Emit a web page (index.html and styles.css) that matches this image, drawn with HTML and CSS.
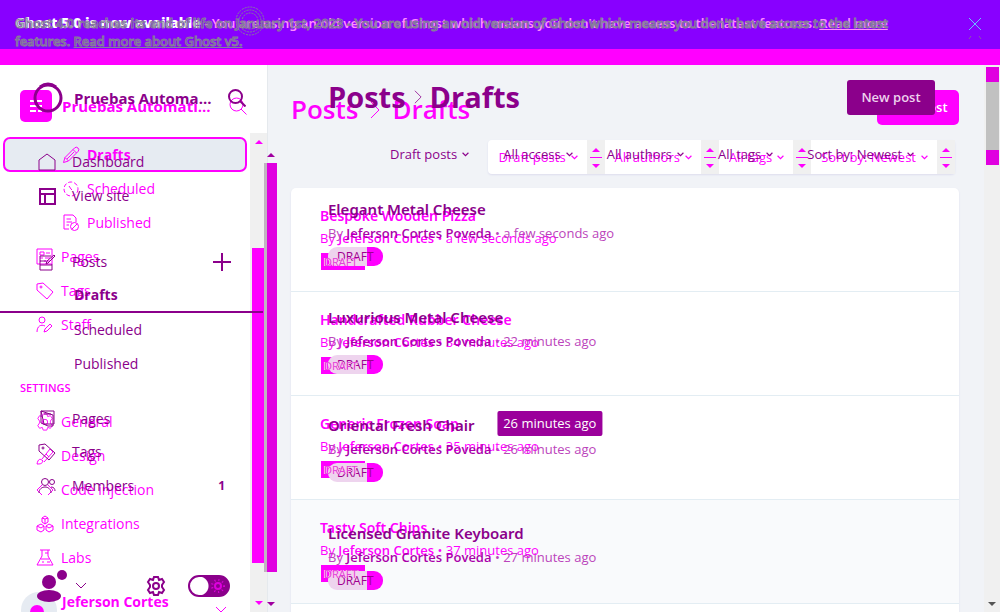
FILE: index.html
```html
<!DOCTYPE html>
<html lang="en">
<head>
<meta charset="utf-8">
<title>Posts - Drafts</title>
<link rel="stylesheet" href="styles.css">
</head>
<body>
<svg class="sprite" aria-hidden="true">
  <symbol id="search" viewBox="0 0 18 18"><circle cx="7.5" cy="7.5" r="6.5"/><path d="M12 12l5.500 5.500"/></symbol>
  <symbol id="pencil" viewBox="0 0 18 18"><path d="M1.500 16.500l1.500-5L12.500 2a2 2 0 0 1 3.500 3.500L6.500 15zM3 11.500L6.500 15M11 3.500L14.500 7M5 13l7-7"/></symbol>
  <symbol id="clock" viewBox="0 0 18 18"><circle cx="9" cy="9" r="7" stroke-dasharray="4 2"/><path d="M7 6l2 3 1 1"/></symbol>
  <symbol id="published" viewBox="0 0 18 18"><path d="M7 15H2V1h9l3 3v4M4.500 5H9M4.500 8H10M4.500 11H7"/><circle cx="12.500" cy="12.500" r="4"/><path d="M10 15l5-5"/></symbol>
  <symbol id="pages" viewBox="0 0 18 18"><path d="M1 1h15v15H1zM4 4h4v3H4zM10 5h4M4 10h3M9 10h5M4 13h1M8 13h6"/></symbol>
  <symbol id="tag" viewBox="0 0 18 18"><path d="M1 2l6-1 10 9-6 7L1 8z"/><circle cx="5" cy="5" r="1"/></symbol>
  <symbol id="staff" viewBox="0 0 18 18"><circle cx="6" cy="4" r="3"/><path d="M1 16c0-6 4-8 8-6M8 16l1-3 5-5 2 2-5 5z"/></symbol>
  <symbol id="gear" viewBox="0 0 20 20"><path d="M8 1h4l1 3 3-1 2 3-2 3v2l2 3-2 3-3-1-1 3H8l-1-3-3 1-2-3 2-3V9L2 6l2-3 3 1z"/><circle cx="10" cy="10" r="3"/></symbol>
  <symbol id="brush" viewBox="0 0 18 18"><path d="M1 17c1-5 3-6 6-3-1 3-3 3-6 3zM6 12l8-10 3 3-9 10M10 7l3 3"/></symbol>
  <symbol id="code" viewBox="0 0 18 18"><path d="M6 4L1 9l5 5M12 4l5 5-5 5"/></symbol>
  <symbol id="blocks" viewBox="0 0 18 18"><path d="M9 1l3 2v4L9 9 6 7V3zM6 3l3 1 3-1M9 4v5M5 9l3 2v4l-3 2-4-2v-4zM13 9l4 2v4l-4 2-3-2v-4zM1 11l4 2 3-2M10 11l3 2 4-2"/></symbol>
  <symbol id="flask" viewBox="0 0 18 18"><path d="M4 1h10M6 1v6L1 16h16L12 7V1M5 10h8M9 4h3M6 13h2M11 13h3"/></symbol>
  <symbol id="home" viewBox="0 0 18 18"><path d="M1 7l8-6 8 6v10H1z"/></symbol>
  <symbol id="layout" viewBox="0 0 18 18"><path d="M2 2h15v15H2zM2 7h15M7 7v10"/></symbol>
  <symbol id="compose" viewBox="0 0 18 18"><path d="M13 3H2v14h12v-6M2 8h6M2 12h12M8 11l1-3 7-6 1 1-7 7z"/></symbol>
  <symbol id="book" viewBox="0 0 18 18"><path d="M3 1h13v13H6zM3 1v12l7 3h5V5zM6 4h7"/></symbol>
  <symbol id="members" viewBox="0 0 18 18"><circle cx="7" cy="5" r="3.500"/><circle cx="14" cy="5" r="2.500"/><path d="M1 16c0-8 12-8 12 0M13 10c3 0 4 2 4 4"/></symbol>
  <symbol id="down" viewBox="0 0 12 12"><path d="M1 3l5 5 5-5"/></symbol>
  <symbol id="right" viewBox="0 0 10 18"><path d="M1 1l8 8-8 8"/></symbol>
  <symbol id="plus" viewBox="0 0 18 18"><path d="M9 0v18M0 9h18"/></symbol>
  <symbol id="steps" viewBox="0 0 18 34"><path class="solid" d="M5 12l4-4 4 4zM5 24l4 4 4-4z"/><path d="M3 17.500h12"/></symbol>
</svg>
<div class="stage">

<div class="layer base">
  <div class="banner">
    <p class="notice"><b>Ghost 5.0 is now available</b> - You are using an old version of Ghost which means you don't have access to the latest features. <a href="#">Read more</a></p>
    <button class="close" aria-label="Close"><svg viewBox="0 0 14 24"><path d="M1 1l12 12M13 1L1 13"/><path class="faint" d="M1 22l2-3M13 22l-2-3"/></svg></button>
  </div>
  <div class="shell">
    <aside class="sidebar">
      <header class="brand">
        <svg class="mark" viewBox="0 0 32 32"><rect width="32" height="32" rx="5"/><path d="M10 11h5M17 11h5M10 16h12M10 21h6M18 21h4"/></svg>
        <strong>Pruebas Automati...</strong>
        <button class="icon-button" aria-label="Search"><svg class="icon"><use href="#search"/></svg></button>
      </header>
      <div class="scroller">
        <nav class="nav">
          <a class="item sub current" href="#"><svg class="icon"><use href="#pencil"/></svg>Drafts</a>
          <a class="item sub" href="#"><svg class="icon"><use href="#clock"/></svg>Scheduled</a>
          <a class="item sub" href="#"><svg class="icon"><use href="#published"/></svg>Published</a>
          <a class="item" href="#"><svg class="icon"><use href="#pages"/></svg>Pages</a>
          <a class="item" href="#"><svg class="icon"><use href="#tag"/></svg>Tags</a>
          <a class="item" href="#"><svg class="icon"><use href="#staff"/></svg>Staff</a>
          <h2 class="group">SETTINGS</h2>
          <a class="item" href="#"><svg class="icon"><use href="#gear"/></svg>General</a>
          <a class="item" href="#"><svg class="icon"><use href="#brush"/></svg>Design</a>
          <a class="item" href="#"><svg class="icon"><use href="#code"/></svg>Code injection</a>
          <a class="item" href="#"><svg class="icon"><use href="#blocks"/></svg>Integrations</a>
          <a class="item" href="#"><svg class="icon"><use href="#flask"/></svg>Labs</a>
          <div class="account"><svg class="photo" viewBox="0 0 36 36"><circle cx="18" cy="18" r="18"/><circle class="solid" cx="16" cy="20" r="7"/></svg><b>Jeferson Cortes</b><svg class="caret"><use href="#down"/></svg></div>
        </nav>
        <div class="rail"><i class="arrow up"></i><i class="thumb"></i><i class="arrow"></i></div>
      </div>
    </aside>
    <main class="main">
      <header class="top"><h1>Posts <svg class="sep"><use href="#right"/></svg> Drafts</h1><button class="primary">New post</button></header>
      <div class="filters">
        <button class="filter">Draft posts <svg><use href="#down"/></svg></button><svg class="steps"><use href="#steps"/></svg>
        <button class="filter">All authors <svg><use href="#down"/></svg></button><svg class="steps"><use href="#steps"/></svg>
        <button class="filter">All tags <svg><use href="#down"/></svg></button><svg class="steps"><use href="#steps"/></svg>
        <button class="filter">Sort by: Newest <svg><use href="#down"/></svg></button><svg class="steps"><use href="#steps"/></svg>
      </div>
      <div class="list">
        <article class="post"><h3>Bespoke Wooden Pizza</h3><p>By <b>Jeferson Cortes</b> • a few seconds ago</p><span class="badge"><span>DRAFT</span></span></article>
        <article class="post"><h3>Handcrafted Rubber Cheese</h3><p>By <b>Jeferson Cortes</b> • 34 minutes ago</p><span class="badge"><span>DRAFT</span></span></article>
        <article class="post"><h3>Generic Frozen Soap</h3><p>By <b>Jeferson Cortes</b> • 35 minutes ago</p><span class="badge"><span>DRAFT</span></span></article>
        <article class="post hovered"><h3>Tasty Soft Chips</h3><p>By <b>Jeferson Cortes</b> • 37 minutes ago</p><span class="badge"><span>DRAFT</span></span></article>
        <article class="post"></article>
      </div>
    </main>
    <div class="page-rail"><i class="thumb"></i><i class="arrow"></i></div>
  </div>
</div>

<div class="layer over">
  <div class="banner">
    <p class="notice"><b>Ghost 4.0 reaches its end of life on January 1st, 2023</b> - You are using an old version of Ghost which means you don't have access to the latest<br>features. <a href="#">Read more about Ghost v5.</a></p>
    <svg class="ring" viewBox="0 0 30 36"><circle cx="15" cy="16" r="14"/><circle cx="15" cy="16" r="11"/><circle cx="15" cy="16" r="8"/></svg>
  </div>
  <div class="shell">
    <aside class="sidebar">
      <header class="brand">
        <svg class="mark" viewBox="0 0 32 32"><circle cx="16" cy="16" r="13"/><path d="M8 5Q16-1 24 5"/></svg>
        <strong>Pruebas Automa...</strong>
        <button class="icon-button" aria-label="Search"><svg class="icon"><use href="#search"/></svg></button>
      </header>
      <nav class="nav">
        <a class="item" href="#"><svg class="icon"><use href="#home"/></svg>Dashboard</a>
        <a class="item" href="#"><svg class="icon heavy"><use href="#layout"/></svg>View site</a>
        <a class="item section" href="#"><svg class="icon"><use href="#compose"/></svg>Posts<svg class="icon heavy add"><use href="#plus"/></svg></a>
        <a class="item sub current" href="#">Drafts</a>
        <a class="item sub" href="#">Scheduled</a>
        <a class="item sub" href="#">Published</a>
        <a class="item section" href="#"><svg class="icon"><use href="#book"/></svg>Pages</a>
        <a class="item" href="#"><svg class="icon"><use href="#tag"/></svg>Tags</a>
        <a class="item" href="#"><svg class="icon"><use href="#members"/></svg>Members<b class="count">1</b></a>
      </nav>
      <footer class="tools">
        <svg class="avatar" viewBox="0 0 32 36"><circle cx="12" cy="14" r="7"/><ellipse cx="12" cy="28" rx="12" ry="6"/><circle cx="25" cy="7" r="5"/></svg>
        <svg class="chevron"><use href="#down"/></svg>
        <button class="icon-button settings" aria-label="Settings"><svg class="icon"><use href="#gear"/></svg></button>
        <label class="switch"><input type="checkbox" aria-label="Night mode"><svg viewBox="0 0 16 16"><circle cx="8" cy="8" r="3"/><circle cx="8" cy="8" r="6" stroke-dasharray="1 3"/></svg></label>
      </footer>
    </aside>
    <div class="rail"><i class="arrow up"></i><i class="thumb"></i><i class="arrow"></i></div>
    <main class="main">
      <header class="top"><h1>Posts <svg class="sep"><use href="#right"/></svg> Drafts</h1><button class="primary">New post</button></header>
      <div class="filters">
        <button class="filter">Draft posts <svg><use href="#down"/></svg></button>
        <button class="filter">All access <svg><use href="#down"/></svg></button>
        <button class="filter">All authors <svg><use href="#down"/></svg></button>
        <button class="filter">All tags <svg><use href="#down"/></svg></button>
        <button class="filter">Sort by: Newest <svg><use href="#down"/></svg></button>
      </div>
      <div class="list">
        <article class="post"><h3>Elegant Metal Cheese</h3><p>By <b>Jeferson Cortes Poveda</b> • <time>a few seconds ago</time></p><span class="badge"><span>DRAFT</span></span></article>
        <article class="post"><h3>Luxurious Metal Cheese</h3><p>By <b>Jeferson Cortes Poveda</b> • <time>22 minutes ago</time></p><span class="badge"><span>DRAFT</span></span></article>
        <article class="post"><h3>Oriental Fresh Chair</h3><p>By <b>Jeferson Cortes Poveda</b> • <time>26 minutes ago<span class="tooltip">26 minutes ago</span></time></p><span class="badge"><span>DRAFT</span></span></article>
        <article class="post"><h3>Licensed Granite Keyboard</h3><p>By <b>Jeferson Cortes Poveda</b> • <time>27 minutes ago</time></p><span class="badge"><span>DRAFT</span></span></article>
      </div>
    </main>
  </div>
</div>

</div>
</body>
</html>
```
FILE: styles.css
```css
* { box-sizing: border-box; }
body { margin: 0; font: 14px/20px "Open Sans", "Noto Sans", sans-serif; color: #f0f; }
h1, h2, h3, p { margin: 0; font-weight: 600; }
a { color: inherit; text-decoration: none; }
button { margin: 0; padding: 0; border: 0; background: none; color: inherit; font: inherit; white-space: nowrap; }
svg { flex: none; fill: none; stroke: currentColor; }
.sprite { display: none; }
.solid { fill: currentColor; stroke: none; }
.icon { width: 18px; height: 18px; }
.heavy { stroke-width: 2px; }

.stage { display: grid; height: 100vh; overflow: hidden; }
.layer { grid-area: 1 / 1; display: flex; flex-direction: column; min-width: 0; height: 100vh; overflow: hidden; }
.over { color: #8b008b; }
.shell { display: flex; flex: 1; min-height: 0; }
.sidebar { flex: none; width: 268px; display: flex; flex-direction: column; min-height: 0; }
.main { flex: 1; min-width: 0; }

/* Announcement */
.banner { flex: none; height: 65px; }
.base .banner { display: flex; justify-content: space-between; background: #80f; border-bottom: 16px solid #f0f; padding: 14px 18px 0 15px; }
.notice { font-family: "Noto Sans", "Open Sans", sans-serif; font-size: 13px; line-height: 18px; font-weight: 500; white-space: nowrap; }
.base .notice { color: #ff8cff; font-weight: 600; }
.base .notice b { color: #fff; font-size: 14px; }
.notice a { text-decoration: underline; }
.close { width: 14px; height: 24px; color: #69bfff; }
.close svg { display: block; width: 14px; height: 24px; margin-top: 3px; }
.faint { stroke: #85a; }
.over .banner { display: grid; padding: 14px 15px 0; }
.over .notice { grid-area: 1 / 1; color: transparent; -webkit-text-stroke: 1px #858098; }
.over .notice b { font-weight: 600; }
.over .notice a { text-decoration-color: #858098; }
.ring { grid-area: 1 / 1; width: 30px; height: 36px; margin: -9px 0 0 220px; color: #858098; stroke-dasharray: 2 1; }

/* Sidebar */
.base .sidebar { background: #fff; border-right: 1px solid #e5e9ed; }
.brand { display: flex; align-items: center; font-size: 15px; }
.brand strong { flex: 1; white-space: nowrap; }
.mark { width: 32px; height: 32px; }
.icon-button svg { display: block; }
.base .brand { height: 68px; padding: 13px 20px 0; gap: 10px; }
.base .mark rect { fill: #f0f; stroke: none; }
.base .mark path { stroke: #fff; stroke-width: 2px; }
.over .brand { height: 66px; padding: 0 22px 0 32px; gap: 10px; }
.over .mark { stroke-width: 3px; }
.over .brand .icon { stroke-width: 2px; }

.scroller { flex: 1; display: flex; min-height: 0; }
.nav { flex: 1; min-height: 0; }
.item { display: flex; align-items: center; height: 34px; }
.base .nav { padding: 4px 3px 0; overflow: hidden; }
.base .item { gap: 7px; padding-left: 33px; }
.base .item.sub { padding-left: 59px; }
.base .item.current { height: 35px; padding-left: 57px; border: 2px solid #f0f; border-radius: 7px; background: #e6ebf2; font-weight: 700; }
.group { padding: 35px 17px 6px; font-size: 11px; line-height: 22px; }
.account { display: flex; align-items: flex-start; gap: 5px; padding: 17px 20px 0 18px; white-space: nowrap; }
.account b { flex: 1; }
.photo { width: 36px; height: 36px; }
.photo circle:first-child { fill: #e6ebf2; stroke: none; }
.caret { width: 12px; height: 12px; margin-top: 12px; }

.over .nav { padding-top: 14px; }
.over .item { padding: 0 37px 0 38px; gap: 16px; }
.over .item.sub { padding-left: 74px; }
.over .item.current { font-weight: 700; border-bottom: 2px solid #8b008b; margin-right: 5px; height: 35px; }
.over .item.section { height: 50px; padding-top: 17px; margin-top: 4px; }
.over .item.section:nth-child(3) { margin-top: 15px; }
.over .add, .count { margin-left: auto; }
.count { padding-right: 6px; font-size: 12px; }
.tools { display: flex; align-items: center; height: 52px; padding: 0 38px 0 37px; }
.avatar { width: 32px; height: 36px; fill: currentColor; stroke: none; }
.chevron { width: 12px; height: 12px; margin-left: 6px; }
.settings { margin-left: auto; }
.settings .icon { width: 20px; height: 20px; stroke-width: 2px; }
.switch { display: grid; align-items: center; margin-left: 22px; color: #d0d; }
.switch input { grid-area: 1 / 1; appearance: none; width: 42px; height: 22px; margin: 0; border: 2px solid #8b008b; border-radius: 11px; background: radial-gradient(circle at 9px 9px, #fff 9px, #8b008b 10px); }
.switch svg { grid-area: 1 / 1; justify-self: end; width: 16px; height: 16px; margin-right: 4px; stroke-width: 2px; }

/* Scrollbars */
.rail { display: flex; flex-direction: column; align-items: center; }
.arrow { border: 4px solid transparent; border-bottom: 0; border-top-color: currentColor; }
.arrow.up { transform: rotate(180deg); }
.base .rail { width: 17px; padding: 7px 0; background: #f0f0f0; color: #f0f; }
.base .rail .thumb { width: 13px; height: 315px; margin: 104px 0 auto; background: #f0f; }
.over .rail { width: 13px; margin-left: -4px; padding: 88px 0 6px; color: #a000a0; }
.over .rail .thumb { width: 13px; height: 409px; margin: 6px 0 auto; background: #e000e0; border-left: 3px solid #c1b4c1; }
.page-rail { display: flex; flex-direction: column; justify-content: space-between; align-items: center; width: 16px; padding: 2px 0 6px; background: #f0f0f0; color: #555; }
.page-rail .thumb { width: 13px; height: 98px; background: #c1c1c1; border: solid #e000e0; border-width: 15px 0; }

/* Posts */
.base .main { background: #f1f3f7; padding: 24px 25px 0 23px; }
.over .main { padding: 15px 65px 0 51px; }
.top { display: flex; align-items: center; justify-content: space-between; }
h1 { display: flex; align-items: center; gap: 12px; font-size: 26px; line-height: 36px; }
.base h1 { padding-top: 5px; line-height: 31px; }
.sep { width: 10px; height: 18px; }
.primary { height: 35px; width: 82px; border-radius: 5px; background: #f0f; color: #fff; font-size: 13px; font-weight: 600; }
.over h1 { gap: 8px; font-size: 29px; font-weight: 700; line-height: 34px; }
.over .sep { width: 8px; height: 14px; }
.over .primary { width: 88px; background: #8b008b; color: #eed2ee; border-radius: 3px; }
.over .top { height: 34px; }
.filters { display: flex; font-size: 13px; white-space: nowrap; }
.filter { display: flex; align-items: center; gap: 5px; }
.filter svg { width: 7px; height: 7px; stroke-width: 2px; }
.base .filters { height: 34px; width: max-content; margin: 15px 4px 14px auto; background: #fff; border-radius: 4px; box-shadow: 0 1px 2px #dde; }
.base .filter { padding: 0 9px 0 10px; }
.steps { width: 18px; height: 34px; background: #f0f0f0; }
.over .filters { height: 34px; gap: 34px; padding-left: 62px; margin-top: 23px; align-items: center; }
.base .list { background: #fff; border-radius: 5px; box-shadow: 0 1px 2px #dde; }
.base .post { height: 104px; padding: 17px 29px 0; border-bottom: 1px solid #e3edf3; }
.base .post.hovered { background: #f9fafc; }
.post h3 { font-family: "Noto Sans", "Open Sans", sans-serif; font-size: 14px; line-height: 22px; }
.post p { font-size: 13px; line-height: 23px; font-weight: 400; }
.post p b { font-weight: 600; }
.over .list { padding-top: 27px; }
.over .post { height: 108px; }
.over .post h3 { font-size: 15px; }
.over .post p { padding-top: 2px; color: #b4b; }
.over .post p b { color: #a0a; }
.badge { display: block; width: max-content; font-size: 11px; line-height: 17px; }
.base .badge { width: 44px; height: 17px; margin: 3px 0 0 1px; padding-left: 3px; background: #f0f; }
.base .badge span { position: relative; z-index: 2; color: #e040d8; text-shadow: 1px 0 #fce, -1px 0 #fce; }
.over .badge { position: relative; z-index: 1; width: 55px; margin-top: 2px; padding-left: 9px; height: 19px; line-height: 19px; border-radius: 9px; background: linear-gradient(90deg, #eed4ee 39px, #f0f 39px); color: #a0008f; font-size: 12px; }
.over .badge span { position: relative; z-index: 3; }
time { position: relative; }
.tooltip { position: absolute; left: 50%; bottom: 100%; transform: translateX(-50%); margin-bottom: 4px; padding: 2px 6px; border-radius: 2px; background: #9b009b; color: #fff; font-size: 13px; line-height: 21px; white-space: nowrap; }
```
